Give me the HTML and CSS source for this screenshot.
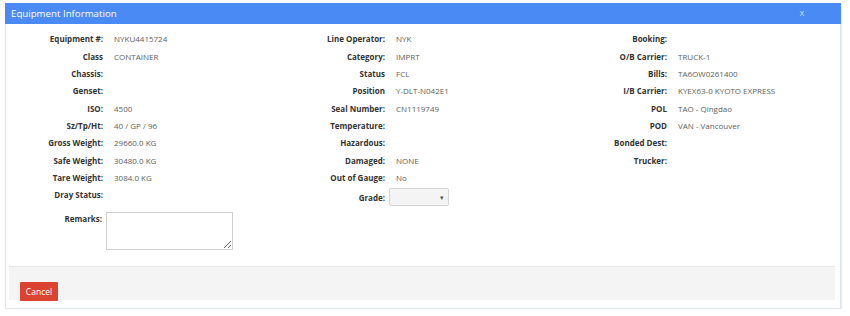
FILE: index.html
```html
<!DOCTYPE html>
<html>
<head>
<meta charset="utf-8">
<link rel="stylesheet" href="styles.css">
</head>
<body>
<div class="modal">
  <div class="modal-header">
    <span class="title">Equipment Information</span>
    <span class="close">X</span>
  </div>
  <div class="modal-body">
    <div class="cols">
      <div class="col">
        <div class="field"><span class="lbl">Equipment #:</span><span class="val">NYKU4415724</span></div>
        <div class="field"><span class="lbl">Class</span><span class="val">CONTAINER</span></div>
        <div class="field"><span class="lbl">Chassis:</span><span class="val"></span></div>
        <div class="field"><span class="lbl">Genset:</span><span class="val"></span></div>
        <div class="field"><span class="lbl">ISO:</span><span class="val">4500</span></div>
        <div class="field"><span class="lbl">Sz/Tp/Ht:</span><span class="val">40 / GP / 96</span></div>
        <div class="field"><span class="lbl">Gross Weight:</span><span class="val">29660.0 KG</span></div>
        <div class="field"><span class="lbl">Safe Weight:</span><span class="val">30480.0 KG</span></div>
        <div class="field"><span class="lbl">Tare Weight:</span><span class="val">3084.0 KG</span></div>
        <div class="field"><span class="lbl">Dray Status:</span><span class="val"></span></div>
      </div>
      <div class="col">
        <div class="field"><span class="lbl">Line Operator:</span><span class="val">NYK</span></div>
        <div class="field"><span class="lbl">Category:</span><span class="val">IMPRT</span></div>
        <div class="field"><span class="lbl">Status</span><span class="val">FCL</span></div>
        <div class="field"><span class="lbl">Position</span><span class="val">Y-DLT-N042E1</span></div>
        <div class="field"><span class="lbl">Seal Number:</span><span class="val">CN1119749</span></div>
        <div class="field"><span class="lbl">Temperature:</span><span class="val"></span></div>
        <div class="field"><span class="lbl">Hazardous:</span><span class="val"></span></div>
        <div class="field"><span class="lbl">Damaged:</span><span class="val">NONE</span></div>
        <div class="field"><span class="lbl">Out of Gauge:</span><span class="val">No</span></div>
        <div class="field grade"><span class="lbl">Grade:</span><span class="select"><span class="arrow">&#9662;</span></span></div>
      </div>
      <div class="col">
        <div class="field"><span class="lbl">Booking:</span><span class="val"></span></div>
        <div class="field"><span class="lbl">O/B Carrier:</span><span class="val">TRUCK-1</span></div>
        <div class="field"><span class="lbl">Bills:</span><span class="val">TA6OW0261400</span></div>
        <div class="field"><span class="lbl">I/B Carrier:</span><span class="val">KYEX63-0 KYOTO EXPRESS</span></div>
        <div class="field"><span class="lbl">POL</span><span class="val">TAO - Qingdao</span></div>
        <div class="field"><span class="lbl">POD</span><span class="val">VAN - Vancouver</span></div>
        <div class="field"><span class="lbl">Bonded Dest:</span><span class="val"></span></div>
        <div class="field"><span class="lbl">Trucker:</span><span class="val"></span></div>
      </div>
    </div>
    <div class="remarks">
      <span class="lbl">Remarks:</span>
      <textarea class="remarks-box"></textarea>
    </div>
  </div>
  <div class="modal-footer">
    <button class="btn-cancel">Cancel</button>
  </div>
</div>
</body>
</html>
```
FILE: styles.css
```css
html, body {
  margin: 0;
  padding: 0;
  background: #ffffff;
  font-family: "Open Sans", "Noto Sans", sans-serif;
}

.modal {
  margin: 3px 0 0 5px;
  width: 834px;
  border: 1px solid #dfe6ea;
  border-top: none;
  box-shadow: 1px 1px 1px rgba(180, 205, 220, 0.35);
  background: #fff;
}

.modal-header {
  height: 21px;
  background: #4a8af4;
  color: #fff;
  display: flex;
  align-items: center;
  justify-content: space-between;
  padding: 0 37px 0 6px;
  margin: 0 -1px;
}

.title {
  font-size: 9.7px;
  line-height: 21px;
}

.close {
  font-size: 7.5px;
  line-height: 21px;
  color: #dfe9ff;
}

.modal-body {
  padding: 6px 0 16px 8px;
}

.cols {
  display: grid;
  grid-template-columns: 282px 282px 270px;
}

.field {
  display: grid;
  grid-template-columns: 89px 1fr;
  column-gap: 11px;
  align-items: center;
  height: 17.35px;
  font-size: 8px;
}

.lbl {
  text-align: right;
  font-weight: 700;
  color: #333;
  font-size: 8px;
  white-space: nowrap;
}

.val {
  color: #5e5e5e;
  white-space: nowrap;
}

.field.grade {
  height: 20px;
  align-items: end;
}

.field.grade .lbl {
  align-self: center;
  padding-top: 3px;
}

.select {
  display: flex;
  justify-content: flex-end;
  align-items: center;
  box-sizing: border-box;
  width: 60px;
  height: 18px;
  margin-left: -7px;
  border: 1px solid #d4d4d4;
  border-radius: 2px;
  background: #f4f4f4;
  padding-right: 4px;
}

.arrow {
  font-size: 7px;
  color: #555;
}

.remarks {
  display: flex;
  align-items: flex-start;
  margin-top: 6px;
}

.remarks .lbl {
  width: 88px;
  line-height: 13px;
}

.remarks-box {
  box-sizing: border-box;
  width: 127px;
  height: 38px;
  margin: 0 0 0 4px;
  border: 1px solid #cfcfcf;
  padding: 0;
  resize: vertical;
}

.modal-footer {
  margin: 0 5px 8px 3px;
  background: #f4f4f4;
  border-top: 1px solid #e8e8e8;
  padding: 11px 0 2px 11px;
  height: 20px;
}

.btn-cancel {
  width: 38px;
  height: 19px;
  border: none;
  border-radius: 1px;
  background: #d9432f;
  color: #fff;
  font-family: "Open Sans", "Noto Sans", sans-serif;
  font-size: 8.5px;
  padding: 0;
}
```
